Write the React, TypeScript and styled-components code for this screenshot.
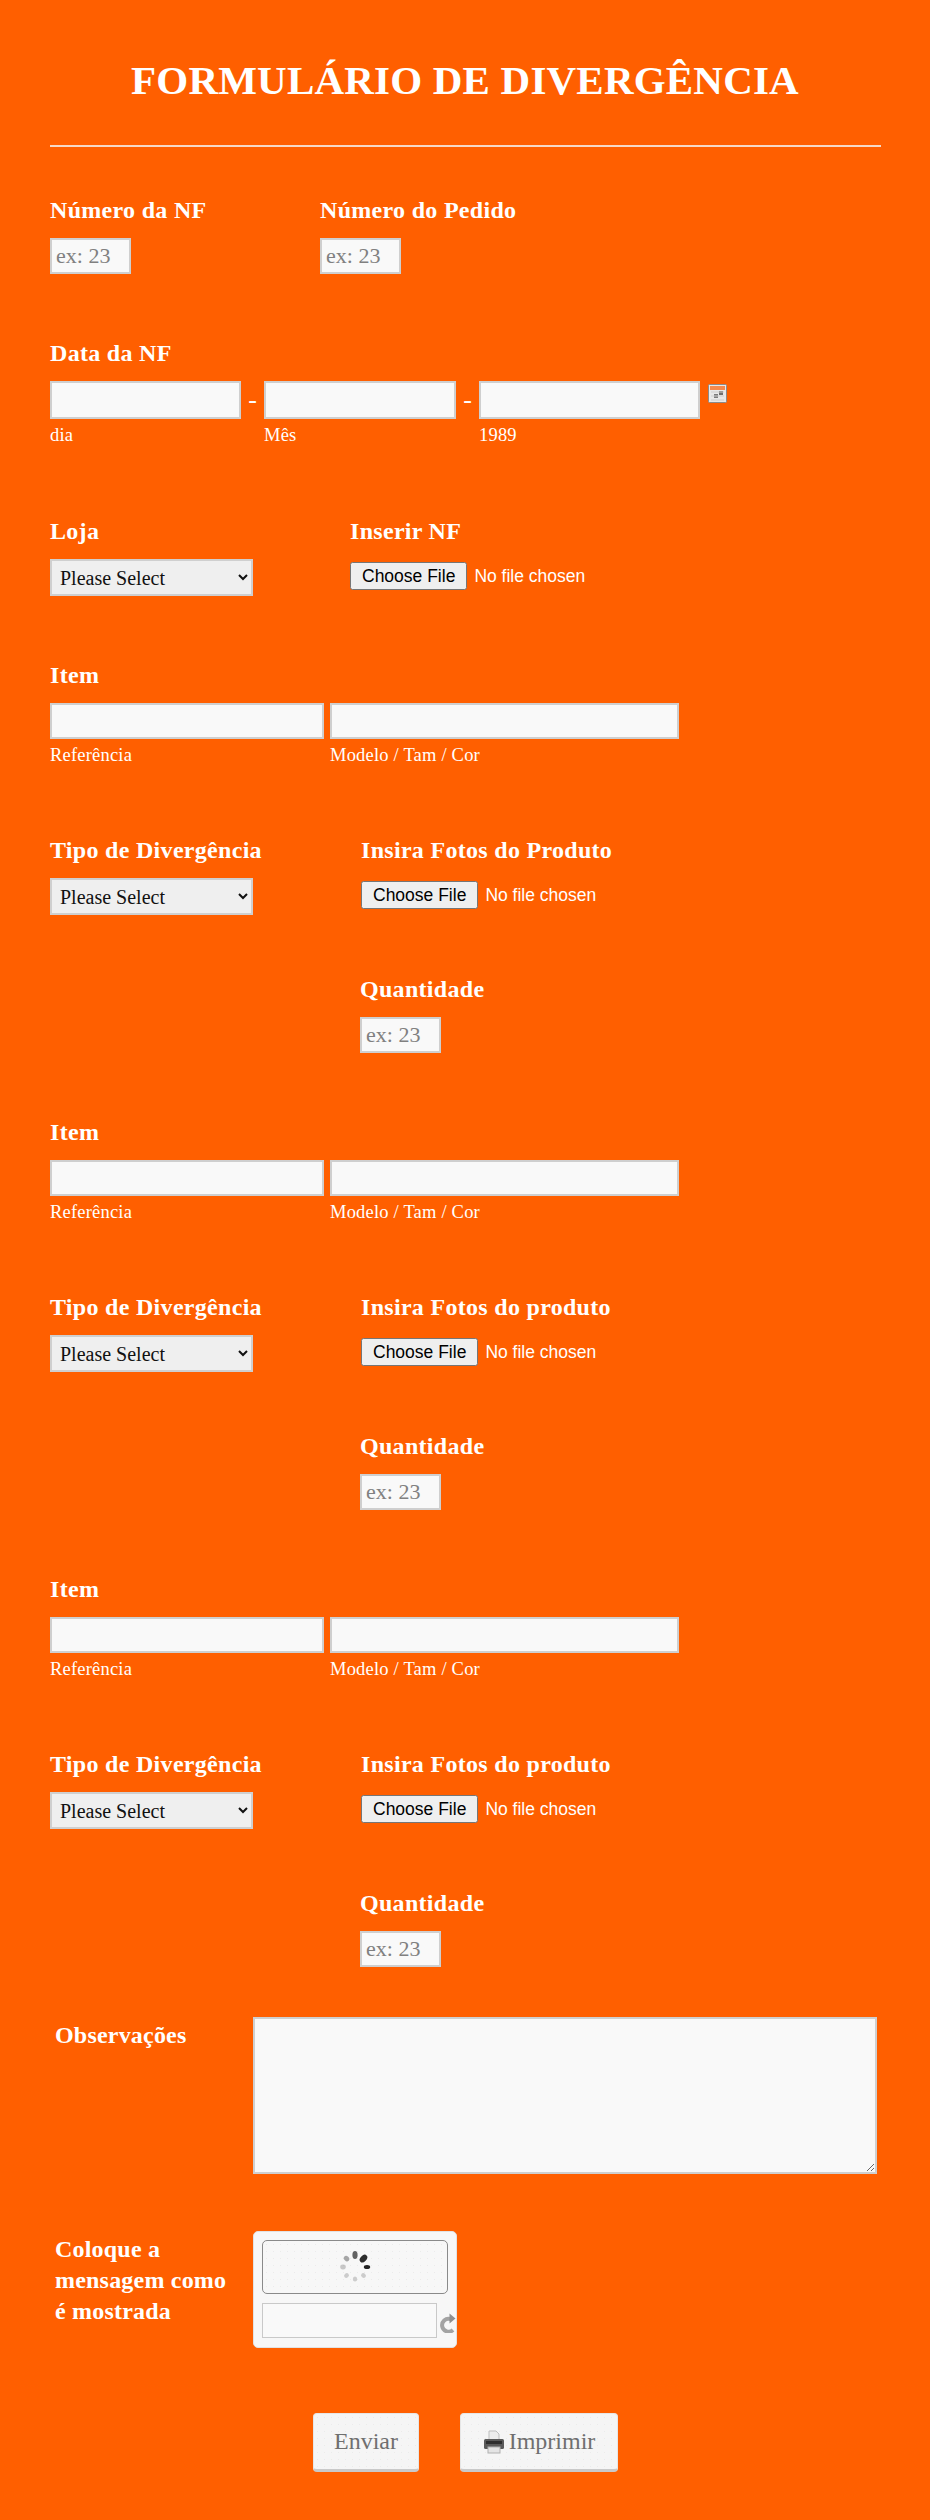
import React from 'react';
import styled, { createGlobalStyle } from 'styled-components';

const GlobalStyle = createGlobalStyle`
  html, body {
    margin: 0;
    padding: 0;
    background: #ff5f00;
  }
  body {
    font-family: "Liberation Serif", "Times New Roman", serif;
    color: #fff;
  }
`;

const Page = styled.main`
  width: 930px;
  height: 2520px;
  box-sizing: border-box;
  padding: 54px 50px 0;
  overflow: hidden;
`;

const Title = styled.h1`
  margin: 0;
  text-align: center;
  font-size: 41px;
  line-height: 52px;
  font-weight: 700;
  letter-spacing: 0.2px;
  color: #fff;
`;

const Rule = styled.hr`
  margin: 39px 0 0;
  border: 0;
  height: 2px;
  width: 831px;
  background: #f6d9c6;
`;

const Row = styled.section<{ $top: number; $gap?: number }>`
  display: flex;
  align-items: flex-start;
  margin-top: ${({ $top }) => $top}px;
  gap: ${({ $gap }) => $gap ?? 0}px;
`;

const Field = styled.div<{ $width?: number }>`
  display: flex;
  flex-direction: column;
  width: ${({ $width }) => ($width ? `${$width}px` : 'auto')};
`;

const Label = styled.label`
  display: block;
  font-size: 24px;
  line-height: 28px;
  font-weight: 700;
  letter-spacing: 0.3px;
  color: #fff;
  margin-bottom: 14px;
`;

const NumberInput = styled.input`
  box-sizing: border-box;
  width: 81px;
  height: 36px;
  padding: 0 4px;
  border: 2px solid #cfcfcf;
  background: #f9f9f9;
  font-family: inherit;
  font-size: 22px;
  &::placeholder { color: #808080; }
`;

const TextInput = styled.input<{ $width: number; $height: number }>`
  box-sizing: border-box;
  display: block;
  width: ${({ $width }) => $width}px;
  height: ${({ $height }) => $height}px;
  border: 2px solid #cfcfcf;
  background: #f9f9f9;
`;

const SubLabel = styled.span`
  display: block;
  margin-top: 6px;
  font-size: 18.5px;
  line-height: 20px;
  letter-spacing: 0.2px;
  color: #fff;
`;

const DateDash = styled.span`
  width: 23px;
  height: 38px;
  line-height: 38px;
  text-align: center;
  font-size: 26px;
  color: #fff;
`;

const CalendarButton = styled.span`
  display: block;
  margin: 3px 0 0 8px;
  width: 19px;
  height: 19px;
`;

const Select = styled.select`
  box-sizing: border-box;
  width: 203px;
  height: 37px;
  padding-left: 4px;
  border: 2px solid #cfcfcf;
  border-radius: 0;
  background-color: #efefef;
  color: #111;
  font-family: inherit;
  font-size: 20px;
`;

const FileInput = styled.input`
  display: block;
  margin-top: 3px;
  font-family: "Liberation Sans", Arial, sans-serif;
  font-size: 17.5px;
  color: #fff;

  &::file-selector-button {
    height: 28px;
    padding: 0 10px;
    margin-right: 7px;
    font-family: inherit;
    font-size: 17.5px;
  }
`;

const LabelColumn = styled.div`
  box-sizing: border-box;
  width: 203px;
  padding: 3px 18px 0 5px;
  font-size: 24px;
  line-height: 31px;
  font-weight: 700;
  letter-spacing: 0.2px;
`;

const TextArea = styled.textarea`
  box-sizing: border-box;
  display: block;
  width: 624px;
  height: 157px;
  border: 2px solid #cfcfcf;
  background: #f9f9f9;
`;

const CaptchaBox = styled.div`
  box-sizing: border-box;
  width: 204px;
  height: 117px;
  padding: 8px;
  border: 1px solid #e2e2e2;
  border-radius: 5px;
  background: #f7f7f7;
`;

const CaptchaImage = styled.div`
  box-sizing: border-box;
  display: flex;
  align-items: center;
  justify-content: center;
  height: 54px;
  border: 1px solid #8a8a8a;
  border-radius: 5px;
  background-color: #f7f7f7;
  background-image: radial-gradient(#ebebeb 0.5px, transparent 0.6px);
  background-size: 7px 7px;
`;

const CaptchaRow = styled.div`
  display: flex;
  align-items: flex-end;
  margin-top: 9px;
`;

const CaptchaInput = styled.input`
  box-sizing: border-box;
  flex: none;
  width: 175px;
  height: 35px;
  border: 1px solid #c9c9c9;
  background: #f9f9f9;
`;

const RefreshSvg = styled.svg`
  flex: none;
  margin: 0 0 5px 3px;
`;

const Actions = styled.div`
  display: flex;
  justify-content: flex-start;
  gap: 41px;
  margin: 65px 0 0 263px;
`;

const Button = styled.button<{ $width: number }>`
  box-sizing: border-box;
  display: flex;
  align-items: center;
  justify-content: center;
  gap: 4px;
  width: ${({ $width }) => $width}px;
  height: 59px;
  padding: 0;
  border: 1px solid #e6e6e6;
  border-bottom: 3px solid #c9c9c9;
  border-radius: 4px;
  background-color: #f5f5f5;
  background-image: radial-gradient(#ebebeb 0.5px, transparent 0.6px);
  background-size: 7px 7px;
  color: #6f6f6f;
  font-family: inherit;
  font-size: 24px;
`;

const CalendarIcon = () => (
  <svg viewBox="0 0 19 19" width="19" height="19">
    <rect x="0.5" y="0.5" width="18" height="18" rx="1" fill="#e9e9e9" stroke="#8b8b8b" />
    <rect x="2" y="2" width="15" height="4" fill="#f58a4e" />
    <rect x="6" y="10" width="4" height="4" fill="#7c7c7c" />
    <rect x="11" y="7" width="4" height="4" fill="#6f6f6f" />
    <path d="M3 8h13M3 12h13M3 16h13" stroke="#cfcfcf" />
  </svg>
);

const spinnerDots = [
  { a: 0, o: 0.7, rx: 2.6, ry: 4 },
  { a: 45, o: 0.95, rx: 3, ry: 4.4 },
  { a: 90, o: 1, rx: 2, ry: 3.2 },
  { a: 135, o: 0.2, rx: 2.2, ry: 2.6 },
  { a: 180, o: 0.2, rx: 2.2, ry: 2.6 },
  { a: 225, o: 0.2, rx: 2.2, ry: 2.6 },
  { a: 270, o: 0.22, rx: 2.4, ry: 2.8 },
  { a: 315, o: 0.38, rx: 2.4, ry: 3 },
];

const Spinner = () => (
  <svg viewBox="0 0 32 32" width="32" height="32">
    {spinnerDots.map(({ a, o, rx, ry }) => (
      <ellipse
        key={a}
        cx="16"
        cy="4"
        rx={rx}
        ry={ry}
        fill="#222"
        opacity={o}
        transform={`rotate(${a} 16 16)`}
      />
    ))}
  </svg>
);

const RefreshIcon = () => (
  <RefreshSvg viewBox="0 0 16 20" width="16" height="20">
    <path d="M10.5 6 A6.5 6.5 0 1 0 13 17" fill="none" stroke="#a3a3a3" strokeWidth="4" />
    <path d="M9.5 0.5 L15.5 5.5 L9.5 10.5 Z" fill="#8f8f8f" />
  </RefreshSvg>
);

const PrinterIcon = () => (
  <svg viewBox="0 0 22 24" width="22" height="24">
    <path d="M6 1h7l3 3v7H6z" fill="#ececec" stroke="#bdbdbd" />
    <rect x="1" y="9" width="20" height="10" rx="1.5" fill="#5a5a5a" />
    <rect x="3" y="11" width="16" height="3" fill="#2f2f2f" />
    <rect x="5" y="17" width="12" height="6" fill="#e4e4e4" stroke="#b0b0b0" />
  </svg>
);

const ItemBlock = ({ top, photoLabel }: { top: number; photoLabel: string }) => (
  <>
    <Row $top={top}>
      <Field>
        <Label>Item</Label>
        <Row $top={0} $gap={6}>
          <Field>
            <TextInput $width={274} $height={36} />
            <SubLabel>Referência</SubLabel>
          </Field>
          <Field>
            <TextInput $width={349} $height={36} />
            <SubLabel>Modelo / Tam / Cor</SubLabel>
          </Field>
        </Row>
      </Field>
    </Row>
    <Row $top={71}>
      <Field $width={311}>
        <Label>Tipo de Divergência</Label>
        <Select defaultValue="">
          <option value="">Please Select</option>
        </Select>
      </Field>
      <Field>
        <Label>{photoLabel}</Label>
        <FileInput type="file" />
      </Field>
    </Row>
    <Row $top={60}>
      <Field $width={310} />
      <Field>
        <Label>Quantidade</Label>
        <NumberInput placeholder="ex: 23" />
      </Field>
    </Row>
  </>
);

export default function App() {
  return (
    <>
      <GlobalStyle />
      <Page>
        <Title>FORMULÁRIO DE DIVERGÊNCIA</Title>
        <Rule />

        <Row $top={49}>
          <Field $width={270}>
            <Label>Número da NF</Label>
            <NumberInput placeholder="ex: 23" />
          </Field>
          <Field>
            <Label>Número do Pedido</Label>
            <NumberInput placeholder="ex: 23" />
          </Field>
        </Row>

        <Row $top={65}>
          <Field>
            <Label>Data da NF</Label>
            <Row $top={0}>
              <Field>
                <TextInput $width={191} $height={38} />
                <SubLabel>dia</SubLabel>
              </Field>
              <DateDash>-</DateDash>
              <Field>
                <TextInput $width={192} $height={38} />
                <SubLabel>Mês</SubLabel>
              </Field>
              <DateDash>-</DateDash>
              <Field>
                <TextInput $width={221} $height={38} />
                <SubLabel>1989</SubLabel>
              </Field>
              <CalendarButton>
                <CalendarIcon />
              </CalendarButton>
            </Row>
          </Field>
        </Row>

        <Row $top={72}>
          <Field $width={300}>
            <Label>Loja</Label>
            <Select defaultValue="">
              <option value="">Please Select</option>
            </Select>
          </Field>
          <Field>
            <Label>Inserir NF</Label>
            <FileInput type="file" />
          </Field>
        </Row>

        <ItemBlock top={65} photoLabel="Insira Fotos do Produto" />
        <ItemBlock top={65} photoLabel="Insira Fotos do produto" />
        <ItemBlock top={65} photoLabel="Insira Fotos do produto" />

        <Row $top={50}>
          <LabelColumn>Observações</LabelColumn>
          <TextArea />
        </Row>

        <Row $top={57}>
          <LabelColumn>Coloque a mensagem como é mostrada</LabelColumn>
          <CaptchaBox>
            <CaptchaImage>
              <Spinner />
            </CaptchaImage>
            <CaptchaRow>
              <CaptchaInput />
              <RefreshIcon />
            </CaptchaRow>
          </CaptchaBox>
        </Row>

        <Actions>
          <Button $width={106}>Enviar</Button>
          <Button $width={158}>
            <PrinterIcon />
            Imprimir
          </Button>
        </Actions>
      </Page>
    </>
  );
}
